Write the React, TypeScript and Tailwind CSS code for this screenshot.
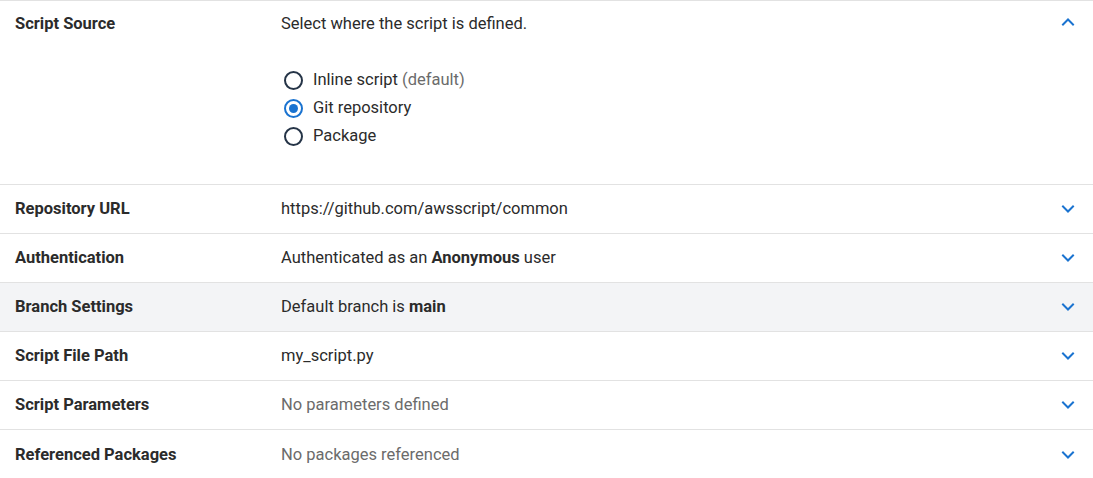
import { useState } from 'react';

type Row = {
  label: string;
  value: React.ReactNode;
  muted?: boolean;
  highlight?: boolean;
};

function Chevron({ up = false }: { up?: boolean }) {
  return (
    <svg
      width="14"
      height="14"
      viewBox="0 0 14 14"
      className={up ? 'rotate-180' : ''}
      fill="none"
      stroke="#1a73d0"
      strokeWidth="2"
      strokeLinecap="square"
    >
      <path d="M2 4.5 L7 9.5 L12 4.5" />
    </svg>
  );
}

function Radio({ checked, label }: { checked: boolean; label: React.ReactNode }) {
  return (
    <label className="flex h-[28px] items-center gap-[10px]">
      <span
        className={`flex h-[19px] w-[19px] items-center justify-center rounded-full border-2 ${
          checked ? 'border-[#1a73d0]' : 'border-[#253447]'
        }`}
      >
        {checked && <span className="h-[9px] w-[9px] rounded-full bg-[#1a73d0]" />}
      </span>
      <span>{label}</span>
    </label>
  );
}

export default function App() {
  const [source] = useState<'inline' | 'git' | 'package'>('git');

  const rows: Row[] = [
    { label: 'Repository URL', value: 'https://github.com/awsscript/common' },
    {
      label: 'Authentication',
      value: (
        <>
          Authenticated as an <b className="font-bold">Anonymous</b> user
        </>
      ),
    },
    {
      label: 'Branch Settings',
      value: (
        <>
          Default branch is <b className="font-bold">main</b>
        </>
      ),
      highlight: true,
    },
    { label: 'Script File Path', value: 'my_script.py' },
    { label: 'Script Parameters', value: 'No parameters defined', muted: true },
    { label: 'Referenced Packages', value: 'No packages referenced', muted: true },
  ];

  return (
    <div className="min-h-[478px] w-[1093px] bg-white font-['Roboto',sans-serif] text-[16.5px] leading-[20px] text-[#2b2b2b]">
      {/* Script source (expanded) */}
      <div className="flex h-[185px] border-y border-[#e2e2e2] pl-[15px] pr-[18px] pt-[13px]">
        <div className="w-[266px] font-bold">Script Source</div>
        <div className="flex-1">
          <div>Select where the script is defined.</div>
          <div className="mt-[32px] flex flex-col pl-[3px]">
            <Radio
              checked={source === 'inline'}
              label={
                <>
                  Inline script <span className="text-[#6b6b6b]">(default)</span>
                </>
              }
            />
            <Radio checked={source === 'git'} label="Git repository" />
            <Radio checked={source === 'package'} label="Package" />
          </div>
        </div>
        <div className="pt-[1px]">
          <Chevron up />
        </div>
      </div>

      {rows.map((row, i) => (
        <div
          key={row.label}
          className={`flex h-[49px] items-center pl-[15px] pr-[18px] ${
            i < rows.length - 1 ? 'border-b border-[#e2e2e2]' : ''
          } ${row.highlight ? 'bg-[#f3f4f6]' : ''}`}
        >
          <div className="w-[266px] font-bold">{row.label}</div>
          <div className={`flex-1 ${row.muted ? 'text-[#6b6b6b]' : ''}`}>{row.value}</div>
          <Chevron />
        </div>
      ))}
    </div>
  );
}
